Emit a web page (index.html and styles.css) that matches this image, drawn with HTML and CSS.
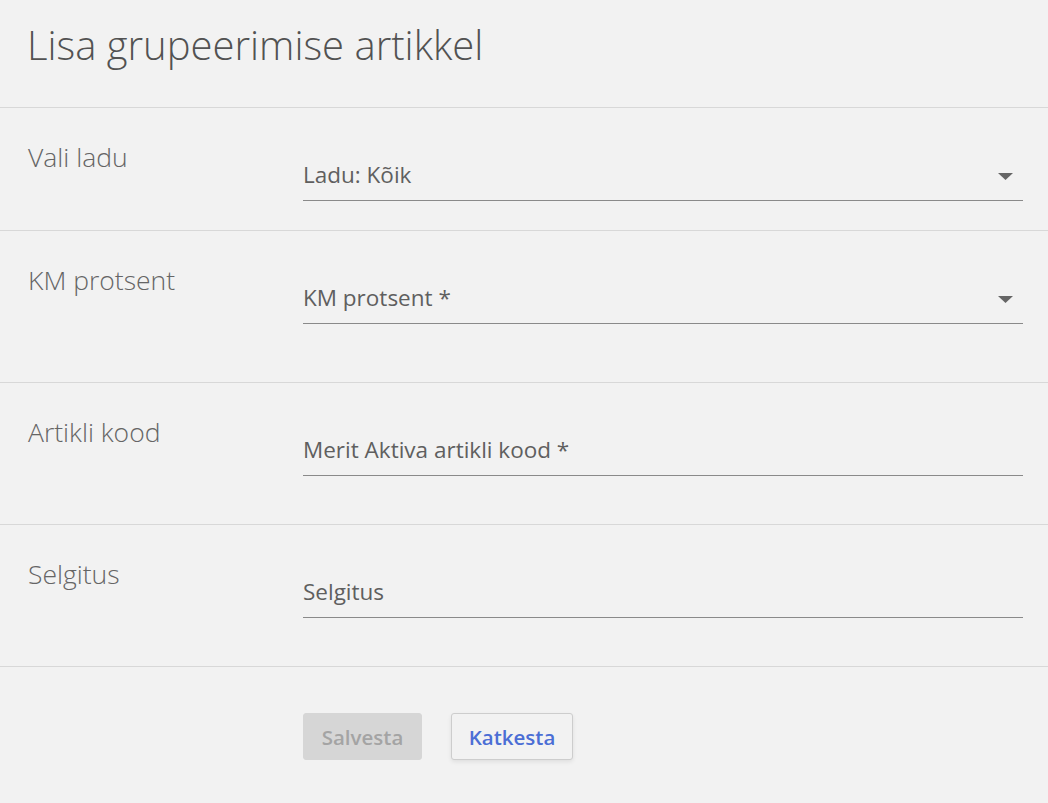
FILE: index.html
```html
<!DOCTYPE html>
<html lang="et">
<head>
<meta charset="utf-8">
<title>Lisa grupeerimise artikkel</title>
<link rel="stylesheet" href="styles.css">
</head>
<body>
<div class="dialog">
  <header class="dialog-header">
    <h1 class="title">Lisa grupeerimise artikkel</h1>
  </header>

  <div class="row row-1">
    <div class="label">Vali ladu</div>
    <div class="field">
      <div class="input select">
        <span class="value">Ladu: Kõik</span>
        <svg class="caret" width="15" height="7" viewBox="0 0 15 7"><path d="M0 0H15L7.5 7Z" fill="#666"/></svg>
      </div>
    </div>
  </div>

  <div class="row row-2">
    <div class="label">KM protsent</div>
    <div class="field">
      <div class="input select">
        <span class="value">KM protsent *</span>
        <svg class="caret" width="15" height="7" viewBox="0 0 15 7"><path d="M0 0H15L7.5 7Z" fill="#666"/></svg>
      </div>
    </div>
  </div>

  <div class="row row-3">
    <div class="label">Artikli kood</div>
    <div class="field">
      <div class="input">
        <span class="value">Merit Aktiva artikli kood *</span>
      </div>
    </div>
  </div>

  <div class="row row-4">
    <div class="label">Selgitus</div>
    <div class="field">
      <div class="input">
        <span class="value">Selgitus</span>
      </div>
    </div>
  </div>

  <div class="actions">
    <button class="btn btn-disabled" disabled>Salvesta</button>
    <button class="btn btn-secondary">Katkesta</button>
  </div>
</div>
</body>
</html>
```

FILE: styles.css
```css
html, body {
  margin: 0;
  padding: 0;
  background: #f2f2f2;
}

body {
  font-family: "Open Sans", "Noto Sans", sans-serif;
  color: #5f5f5f;
}

.dialog {
  width: 1048px;
}

.dialog-header {
  height: 108px;
  border-bottom: 1px solid #d8d8d8;
  padding: 21px 0 0 27px;
  box-sizing: border-box;
}

.title {
  margin: 0;
  font-size: 40px;
  line-height: 48px;
  font-weight: 300;
  color: #525252;
}

.row {
  display: flex;
  border-bottom: 1px solid #d8d8d8;
  padding: 0 25px 0 28px;
}

.row-1 { height: 122px; }
.row-2 { height: 151px; }
.row-3 { height: 141px; }
.row-4 { height: 141px; }

.label {
  width: 275px;
  flex: none;
  padding-top: 34px;
  font-size: 26.5px;
  line-height: 30px;
  font-weight: 300;
  color: #656565;
}

.field {
  flex: 1;
  padding-top: 55px;
}

.input {
  display: flex;
  align-items: center;
  justify-content: space-between;
  padding-bottom: 13px;
  border-bottom: 1px solid #8a8a8a;
}

.value {
  font-size: 22.5px;
  line-height: 24px;
  color: #5f5f5f;
}

.caret {
  margin-right: 10px;
  margin-top: 2px;
}

.actions {
  display: flex;
  gap: 29px;
  padding: 46px 0 0 303px;
  height: 136px;
  box-sizing: border-box;
}

.btn {
  height: 47px;
  border-radius: 3px;
  font-family: "Open Sans", "Noto Sans", sans-serif;
  font-size: 20.5px;
  font-weight: 600;
  padding: 0 10px;
  cursor: pointer;
}

.btn-disabled {
  width: 119px;
  background: #d6d6d6;
  border: 1px solid #d6d6d6;
  color: #a4a4a4;
  cursor: default;
}

.btn-secondary {
  width: 122px;
  background: #f2f2f2;
  border: 1px solid #cdcdcd;
  color: #4b6ed5;
  box-shadow: 0 2px 4px rgba(0, 0, 0, 0.08);
}
```
